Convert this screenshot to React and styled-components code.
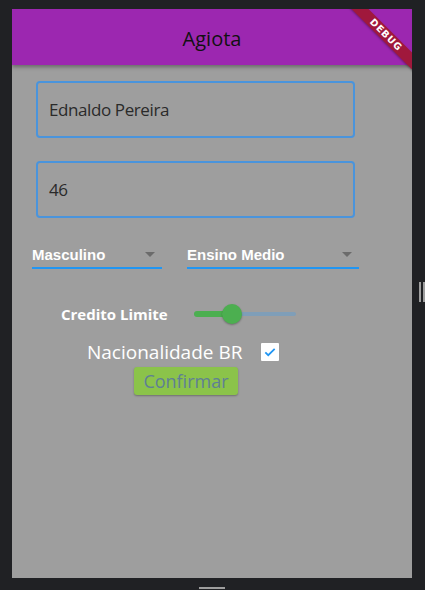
import React from 'react';
import styled, { createGlobalStyle } from 'styled-components';

const GlobalStyle = createGlobalStyle`
  html, body {
    margin: 0;
    padding: 0;
    background: #202124;
  }
`;

const App = () => {
  return (
    <>
      <GlobalStyle />
      <Frame>
        <Screen>
          <AppBar>
            <Title>Agiota</Title>
          </AppBar>
          <DebugBanner>DEBUG</DebugBanner>
          <Body>
            <TextField>Ednaldo Pereira</TextField>
            <TextField>46</TextField>
            <DropdownRow>
              <Dropdown width={130}>
                Masculino
                <Caret />
              </Dropdown>
              <Dropdown width={172}>
                Ensino Medio
                <Caret />
              </Dropdown>
            </DropdownRow>
            <SliderRow>
              <SliderLabel>Credito Limite</SliderLabel>
              <SliderTrack>
                <SliderActive style={{ width: '38px' }} />
                <SliderThumb style={{ left: '38px' }} />
              </SliderTrack>
            </SliderRow>
            <CheckRow>
              <CheckLabel>Nacionalidade BR</CheckLabel>
              <CheckBox>
                <svg width="14" height="14" viewBox="0 0 24 24">
                  <path
                    d="M4 12.5l5 5L20 6.5"
                    fill="none"
                    stroke="#2196f3"
                    strokeWidth="3"
                  />
                </svg>
              </CheckBox>
            </CheckRow>
            <ConfirmButton>Confirmar</ConfirmButton>
          </Body>
        </Screen>
        <ResizeHandle />
        <HomeBar />
      </Frame>
    </>
  );
};

export default App;

const Frame = styled.div`
  position: relative;
  width: 425px;
  height: 590px;
  box-sizing: border-box;
  padding: 9px 13px 12px 12px;
  display: flex;
  background: #202124;
`;

const Screen = styled.div`
  position: relative;
  flex: 1;
  display: flex;
  flex-direction: column;
  background: #9e9e9e;
  overflow: hidden;
`;

const AppBar = styled.div`
  height: 56px;
  flex-shrink: 0;
  display: flex;
  align-items: center;
  justify-content: center;
  background: #9c27b0;
  box-shadow: 0 2px 4px rgba(0, 0, 0, 0.35);
  z-index: 1;
`;

const Title = styled.span`
  font-family: 'Open Sans', 'Noto Sans', sans-serif;
  font-size: 20px;
  color: #111;
  margin-top: 2px;
`;

const DebugBanner = styled.div`
  position: absolute;
  top: 20px;
  right: -24px;
  width: 100px;
  height: 12px;
  transform: rotate(45deg);
  background: #a0183c;
  color: #fff;
  font-family: 'DejaVu Sans', sans-serif;
  font-weight: bold;
  font-size: 9.5px;
  line-height: 12px;
  text-align: center;
  letter-spacing: 0.8px;
  z-index: 2;
  box-shadow: 0 1px 2px rgba(0, 0, 0, 0.3);
`;

const Body = styled.div`
  display: flex;
  flex-direction: column;
  padding: 16px 0 0 24px;
`;

const TextField = styled.div`
  box-sizing: border-box;
  width: 319px;
  height: 57px;
  margin-bottom: 23px;
  padding: 0 11px;
  display: flex;
  align-items: center;
  border: 2px solid #4a94dc;
  border-radius: 4px;
  font-family: 'Open Sans', 'Noto Sans', sans-serif;
  font-size: 17px;
  letter-spacing: -0.4px;
  color: #2a2a2a;
`;

const DropdownRow = styled.div`
  display: flex;
  gap: 25px;
  margin: -1px 0 0 -4px;
`;

const Dropdown = styled.div`
  position: relative;
  box-sizing: border-box;
  width: ${(p) => p.width}px;
  height: 29px;
  padding-top: 6px;
  border-bottom: 2px solid #2196f3;
  font-family: 'Liberation Sans', Arial, sans-serif;
  font-weight: bold;
  font-size: 15px;
  color: #fff;
`;

const Caret = styled.span`
  position: absolute;
  right: 7px;
  top: 12px;
  width: 0;
  height: 0;
  border-left: 5px solid transparent;
  border-right: 5px solid transparent;
  border-top: 5px solid #6b6b6b;
`;

const SliderRow = styled.div`
  display: flex;
  align-items: center;
  height: 30px;
  margin: 30px 0 0 25px;
`;

const SliderLabel = styled.span`
  font-family: 'Open Sans', 'Noto Sans', sans-serif;
  font-weight: bold;
  font-size: 15px;
  color: #fff;
  width: 133px;
`;

const SliderTrack = styled.div`
  position: relative;
  width: 102px;
  height: 4px;
  border-radius: 2px;
  background: #7f9eb8;
`;

const SliderActive = styled.div`
  position: absolute;
  left: 0;
  top: -1px;
  height: 6px;
  border-radius: 3px;
  background: #4caf50;
`;

const SliderThumb = styled.div`
  position: absolute;
  top: -8px;
  width: 20px;
  height: 20px;
  margin-left: -10px;
  border-radius: 50%;
  background: #4caf50;
  box-shadow: 0 1px 2px rgba(0, 0, 0, 0.3);
`;

const CheckRow = styled.div`
  display: flex;
  align-items: center;
  margin: 10px 0 0 51px;
`;

const CheckLabel = styled.span`
  font-family: 'Open Sans', 'Noto Sans', sans-serif;
  font-size: 19px;
  color: #fff;
`;

const CheckBox = styled.span`
  width: 18px;
  height: 18px;
  margin-left: 19px;
  background: #fff;
  border-radius: 1px;
  display: flex;
  align-items: center;
  justify-content: center;
`;

const ConfirmButton = styled.button`
  align-self: flex-start;
  margin: 2px 0 0 98px;
  width: 104px;
  height: 28px;
  padding: 0;
  border: none;
  border-radius: 3px;
  background: #8bc34a;
  box-shadow: 0 1px 2px rgba(0, 0, 0, 0.3);
  font-family: 'Open Sans', 'Noto Sans', sans-serif;
  font-size: 18px;
  line-height: 28px;
  color: #5f7f95;
`;

const ResizeHandle = styled.div`
  position: absolute;
  right: 0;
  top: 282px;
  width: 6px;
  height: 20px;
  border-left: 2px solid #9e9e9e;
  border-right: 2px solid #9e9e9e;
  box-sizing: border-box;
`;

const HomeBar = styled.div`
  position: absolute;
  left: 199px;
  bottom: 1px;
  width: 26px;
  height: 2px;
  background: #9e9e9e;
`;
